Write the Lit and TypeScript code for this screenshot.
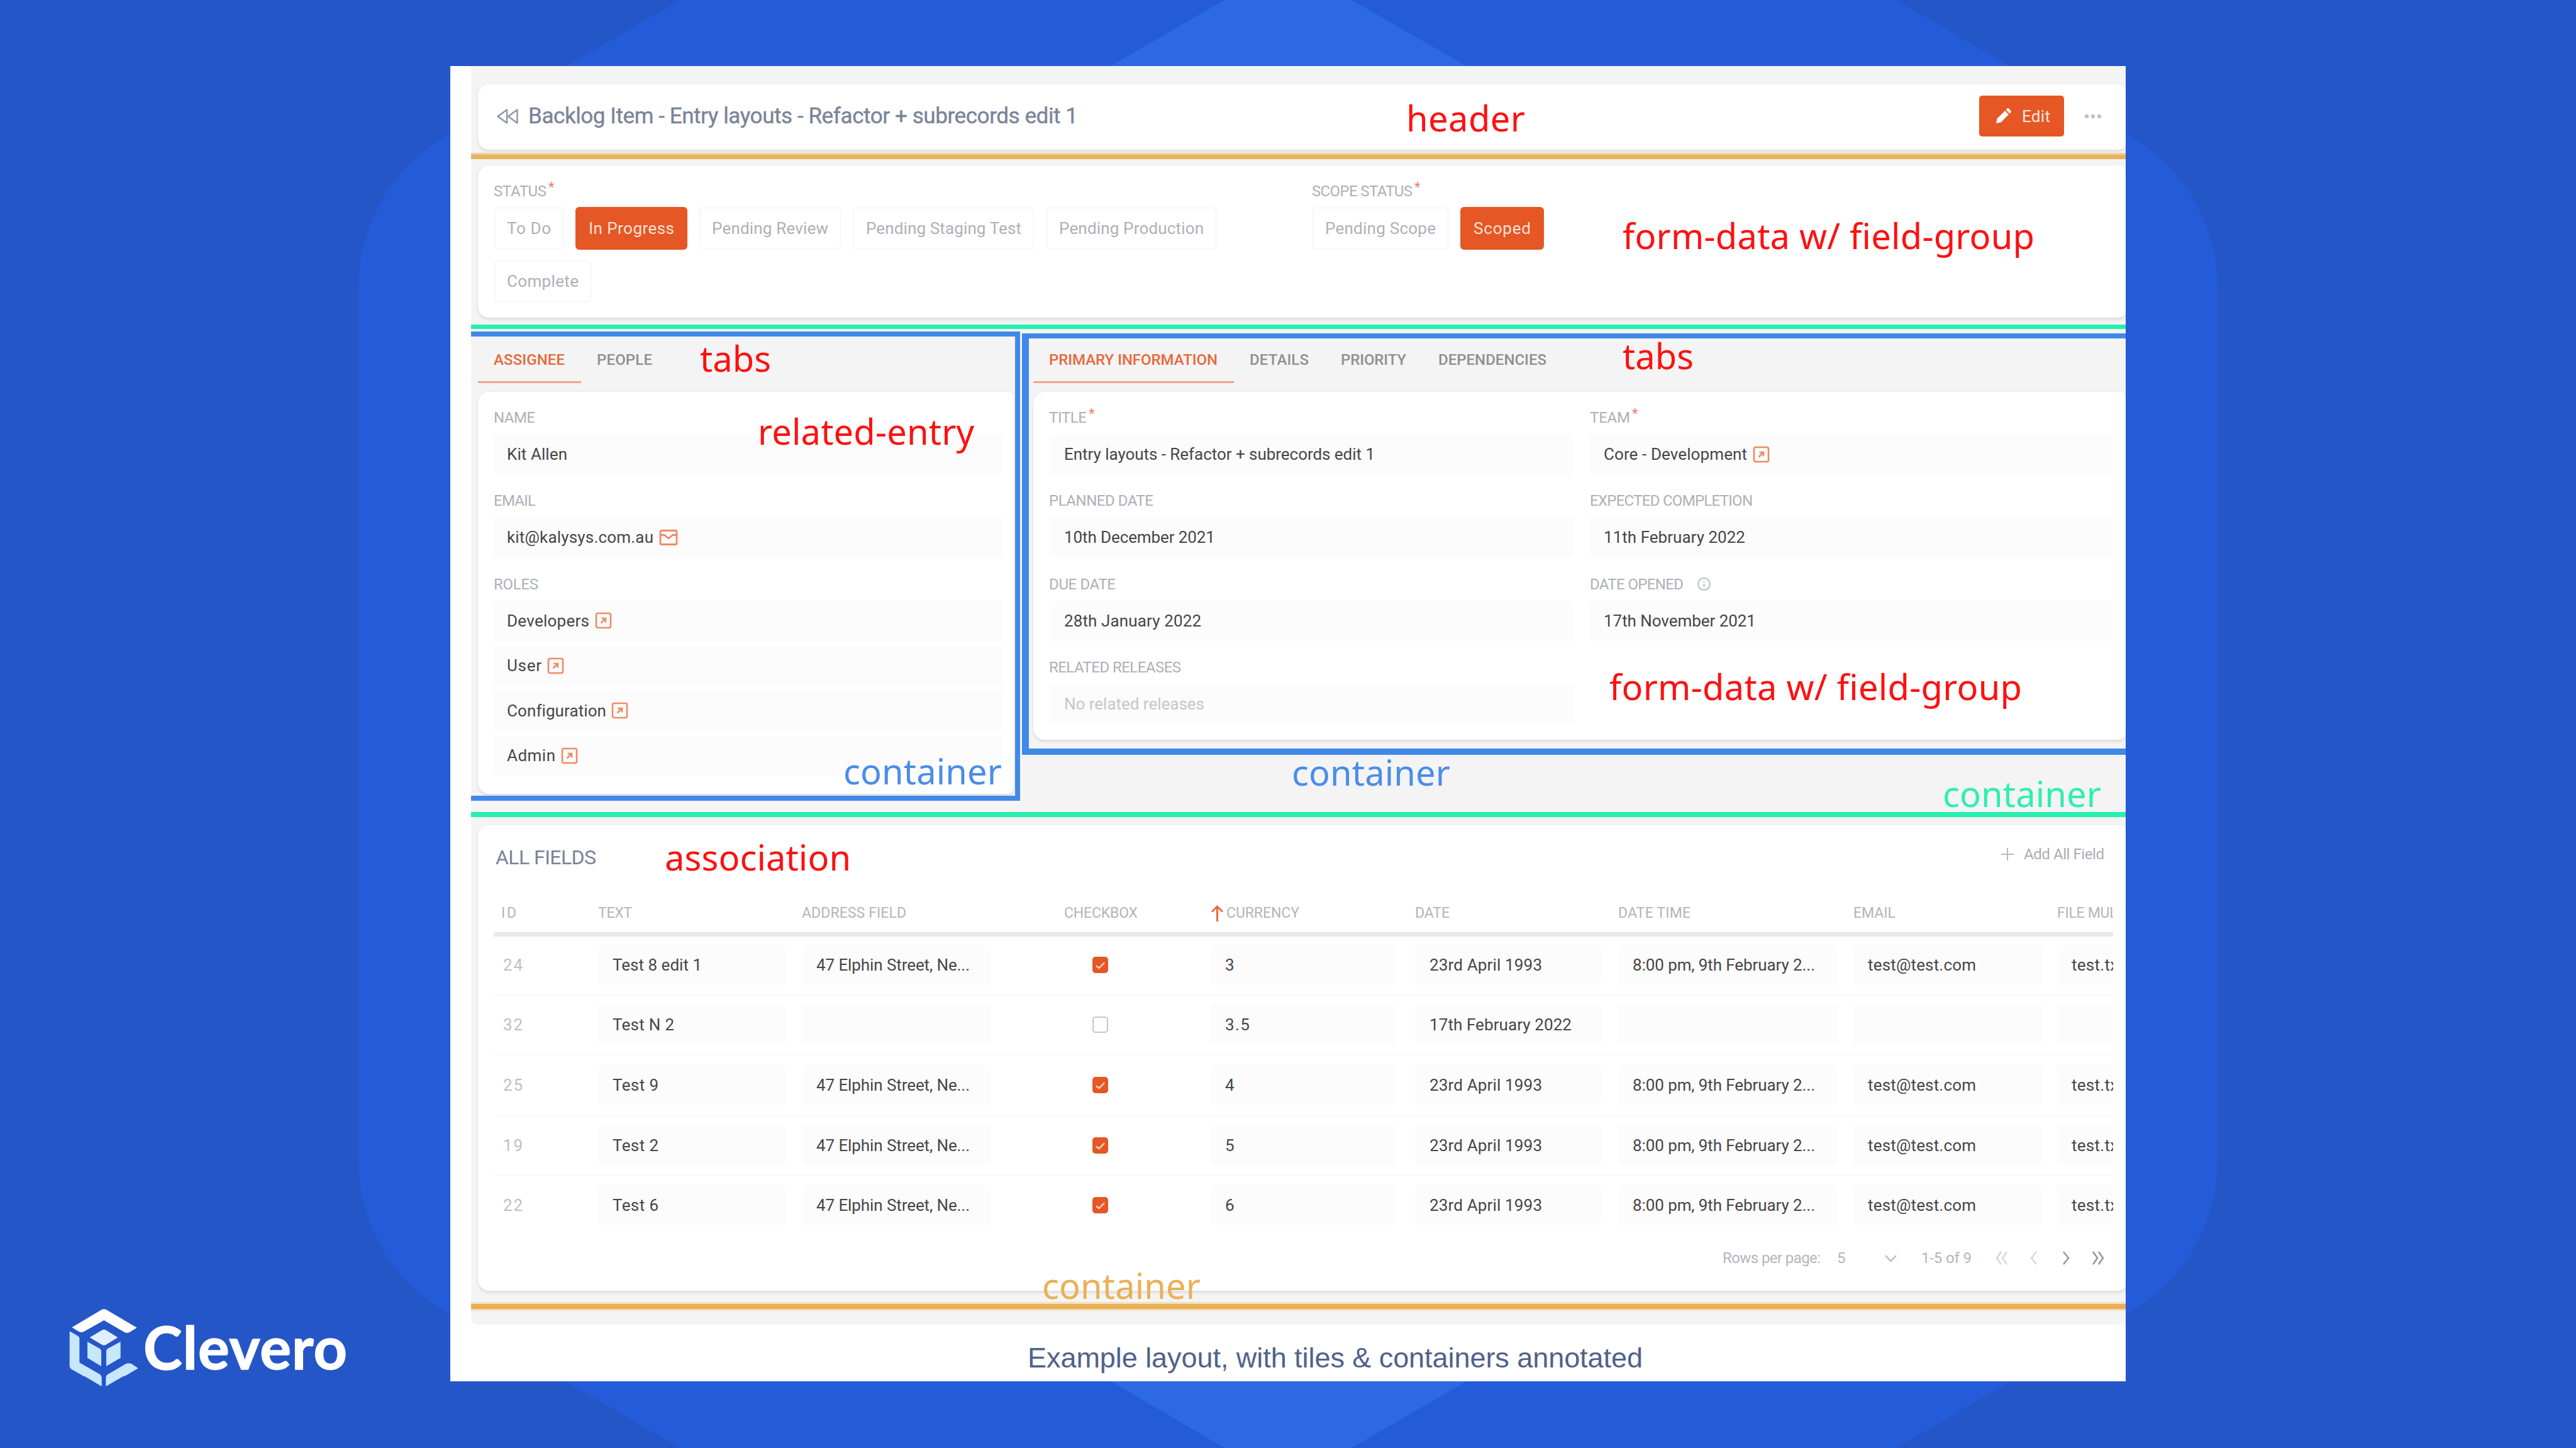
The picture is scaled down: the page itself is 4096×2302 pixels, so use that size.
import { LitElement, html, css, svg, nothing } from "lit";
import { customElement, property } from "lit/decorators.js";
import { styleMap } from "lit/directives/style-map.js";

/** A single line of text tracked so that it spans a given width. */
@customElement("fit-text")
class FitText extends LitElement {
  @property() text = "";
  @property({ type: Number }) span = 0;

  static styles = css`
    :host { display: inline-block; white-space: pre; flex: none; }
  `;

  render() {
    return html`<span>${this.text}</span>`;
  }

  updated() {
    const el = this.renderRoot.querySelector("span") as HTMLElement;
    el.style.letterSpacing = "0";
    const target = this.span + 3;
    const natural = el.getBoundingClientRect().width;
    this.style.width = `${target}px`;
    el.style.letterSpacing = `${(target - natural) / Math.max(1, this.text.length - 1)}px`;
  }
}

const t = (text: string, span: number) => html`<fit-text .text=${text} .span=${span}></fit-text>`;

const linkIcon = html`<svg class="ico" width="27" height="27" viewBox="0 0 27 27" fill="none" stroke="#f08a64" stroke-width="2.6">
  <rect x="2" y="2" width="23" height="23" rx="2.5"></rect>
  <path d="M9.5 17.5 L16.5 10.5 M10.5 10 H17 V16.5"></path></svg>`;
const mailIcon = html`<svg class="ico" width="30" height="27" viewBox="0 0 30 27" fill="none" stroke="#f08a64" stroke-width="2.8">
  <rect x="2" y="2.5" width="26" height="22" rx="2"></rect>
  <path d="M3 9.5 H8.5 L15 15 L21.5 9.5 H27"></path></svg>`;
const infoIcon = html`<svg class="info" width="23" height="23" viewBox="0 0 23 23" fill="none" stroke="#b9bcc3" stroke-width="2">
  <circle cx="11.5" cy="11.5" r="9.5"></circle><path d="M11.5 10.5 V16 M11.5 6.5 V8.5"></path></svg>`;

interface Field {
  label: string; lw: number; star?: boolean; info?: boolean;
  values: { text: string; w: number; icon?: "link" | "mail"; muted?: boolean }[];
}

const assignee: Field[] = [
  { label: "NAME", lw: 63, values: [{ text: "Kit Allen", w: 93 }] },
  { label: "EMAIL", lw: 64, values: [{ text: "kit@kalysys.com.au", w: 230, icon: "mail" }] },
  { label: "ROLES", lw: 68, values: [
    { text: "Developers", w: 128, icon: "link" },
    { text: "User", w: 52, icon: "link" },
    { text: "Configuration", w: 154, icon: "link" },
    { text: "Admin", w: 74, icon: "link" },
  ] },
];

const primary: Field[] = [
  { label: "TITLE", lw: 57, star: true, values: [{ text: "Entry layouts - Refactor + subrecords edit 1", w: 491 }] },
  { label: "TEAM", lw: 61, star: true, values: [{ text: "Core - Development", w: 225, icon: "link" }] },
  { label: "PLANNED DATE", lw: 163, values: [{ text: "10th December 2021", w: 237 }] },
  { label: "EXPECTED COMPLETION", lw: 256, values: [{ text: "11th February 2022", w: 222 }] },
  { label: "DUE DATE", lw: 103, values: [{ text: "28th January 2022", w: 215 }] },
  { label: "DATE OPENED", lw: 146, info: true, values: [{ text: "17th November 2021", w: 239 }] },
  { label: "RELATED RELEASES", lw: 207, values: [{ text: "No related releases", w: 220, muted: true }] },
];

const columns = [
  { label: "ID", lw: 21, box: 0 },
  { label: "TEXT", lw: 51, box: 298 },
  { label: "ADDRESS FIELD", lw: 163, box: 300 },
  { label: "CHECKBOX", lw: 114, box: 0 },
  { label: "CURRENCY", lw: 113, box: 295 },
  { label: "DATE", lw: 52, box: 296 },
  { label: "DATE TIME", lw: 112, box: 349 },
  { label: "EMAIL", lw: 64, box: 300 },
  { label: "FILE MULTI", lw: 109, box: 300 },
];

type Cell = [string, number] | boolean | null;
const addr: Cell = ["47 Elphin Street, Ne...", 241];
const april: Cell = ["23rd April 1993", 176];
const dt: Cell = ["8:00 pm, 9th February 2...", 287];
const mail: Cell = ["test@test.com", 169];
const file: Cell = ["test.txt", 80];
const rows: Cell[][] = [
  [["24", 28], ["Test 8 edit 1", 139], addr, true, ["3", 13], april, dt, mail, file],
  [["32", 28], ["Test N 2", 95], null, false, ["3.5", 36], ["17th February 2022", 223], null, null, null],
  [["25", 28], ["Test 9", 70], addr, true, ["4", 13], april, dt, mail, file],
  [["19", 28], ["Test 2", 70], addr, true, ["5", 13], april, dt, mail, file],
  [["22", 28], ["Test 6", 70], addr, true, ["6", 13], april, dt, mail, file],
];

/** Overlay captions: text, left, baseline, width, colour class. */
const notes: [string, number, number, number, string][] = [
  ["header", 2238, 209, 186, "red"],
  ["form-data w/ field-group", 2582, 396, 652, "red"],
  ["tabs", 1115, 591, 110, "red"],
  ["related-entry", 1207, 707, 341, "red"],
  ["container", 1343, 1247, 249, "blue"],
  ["tabs", 2582, 587, 110, "red"],
  ["container", 2056, 1249, 249, "blue"],
  ["form-data w/ field-group", 2561, 1113, 653, "red"],
  ["container", 3091, 1283, 249, "green"],
  ["association", 1059, 1384, 293, "red"],
  ["container", 1659, 2065, 249, "amber"],
];

@customElement("app-root")
class AppRoot extends LitElement {
  static styles = css`
    :host { display: block; width: 4096px; height: 2302px; overflow: hidden; }
    * { box-sizing: border-box; }
    .stage { position: relative; width: 4096px; height: 2302px; background: #2456c8; padding: 105px 0 0 716px;
      font-family: Roboto, "Liberation Sans", sans-serif; font-size: 26px; overflow: hidden; }
    .bg { position: absolute; inset: 0; }
    svg { display: block; flex: none; }
    .frame { position: relative; width: 2664px; height: 2091px; background: #fff; padding-left: 33px; overflow: hidden; }
    .shot { position: relative; width: 2631px; height: 2001px; background: #f4f4f4; padding: 29px 0 0 11px;
      border-bottom-left-radius: 8px; }
    .card { background: #fff; border-radius: 18px 10px 10px 18px;
      box-shadow: 0 4px 4px rgba(0,0,0,.07), 0 0 5px rgba(0,0,0,.05); }

    .head { height: 104px; display: flex; align-items: center; padding: 0 39px 3px 29px; }
    .title { font-size: 35px; color: #7a8498; margin-left: 15px; flex: 1; -webkit-text-stroke: .4px #7a8498; }
    .edit { width: 135px; height: 65px; background: #e55724; border-radius: 5px; color: #fde9e1; display: flex;
      align-items: center; padding-left: 25px; gap: 16px; }
    .dots { margin-left: 33px; display: flex; gap: 4px; }
    .dots i { width: 6px; height: 6px; border-radius: 2px; background: #bfc1c7; }

    .status { height: 242px; margin-top: 25px; display: grid; grid-template-columns: 1301px 1fr; padding: 26px 0 0 25px; }
    .label { display: flex; height: 30px; line-height: 30px; font-size: 24px; color: #adb0b7; align-items: center; }
    .star { color: #f27e74; font-size: 22px; line-height: 18px; height: 30px; margin-left: 3px; }
    .info { margin-left: 21px; }
    .pills { display: flex; flex-wrap: wrap; row-gap: 16px; column-gap: 18.5px; margin-top: 10px; width: 1200px; }
    .pill { height: 68px; border: 3px solid #f9f9f9; border-radius: 6px; color: #aeb0b7; display: flex; align-items: center;
      padding: 0 17.5px 1px 18px; }
    .pill.on { background: #e55724; border-color: #e55724; color: #fbe3da; }

    .split { display: flex; gap: 31px; margin-top: 33px; align-items: flex-start; }
    .left { width: 852px; }
    .right { flex: 1; }
    .tabs { height: 85px; display: flex; font-size: 24px; font-weight: 500; color: #8f8f8f; }
    .tab { height: 71px; line-height: 68px; padding: 0 26px 0 25px; border-bottom: 3px solid transparent; }
    .tab.on { color: #e8683a; border-bottom-color: #f2a488; }
    .left .card { height: 639px; padding: 26px 18px 0 25px; }
    .right .card { height: 553px; padding: 26px 20px 0 25px; display: grid; grid-template-columns: 834px 830px; column-gap: 26px;
      align-content: start; row-gap: 27.4px; }
    .left .field { margin-bottom: 27.4px; }
    .value { height: 64px; background: #fcfcfc; border-radius: 5px; margin-top: 11px; padding-left: 21px; display: flex;
      align-items: center; color: #464646; font-size: 26px; }
    .value + .value { margin-top: 7.5px; }
    .right .value { padding-left: 24px; }
    .right .field:nth-child(even) .value { padding-left: 22px; }
    .value.muted { color: #c3c6cf; }
    .ico { margin-left: 9px; }

    .table { height: 740px; margin-top: 50px; padding: 0 20px 0 25px; }
    .thead { height: 102px; display: flex; align-items: center; font-size: 32px; color: #7a8398; padding: 0 14px 0 3px; }
    .add { margin-left: auto; display: flex; align-items: center; gap: 16px; font-size: 24px; color: #aaadb5; padding-bottom: 10px; }
    .grid { overflow: hidden; }
    .row { display: grid; grid-template-columns: 166px 324px 417px 233px 325px 323px 374px 324px 300px; align-items: center; }
    .labels { height: 75px; border-bottom: 7px solid #e9e9e9; padding-top: 7px; font-size: 23px; color: #b2b5bb; margin-bottom: -2px; }
    .labels .id { padding-left: 12px; }
    .sort { display: flex; align-items: center; gap: 4px; }
    .body { height: 95.6px; border-bottom: 2px solid #f9f9f9; color: #464646; }
    .body:last-child { border-bottom-color: transparent; }
    .cell { height: 64px; background: #fcfcfc; border-radius: 5px; padding-left: 23px; display: flex; align-items: center; overflow: hidden; }
    .num { padding-left: 15px; color: #bdbfc5; }
    .check { margin-left: 45px; width: 25px; height: 26px; border-radius: 5px; border: 2.5px solid #c4c6cc; }
    .check.on { background: #e55724; border: 0; }
    .pager { height: 70px; display: flex; align-items: center; font-size: 24px; color: #b4b6bd; padding-left: 1954px; }
    .g1 { margin-left: 26px; } .g2 { margin-left: 60px; } .g3 { margin-left: 39px; }

    .caption { position: relative; margin: 28px 0 0 885px; height: 50px; color: #50628a;
      font: 45px/50px "Liberation Sans", Arial, sans-serif; }

    .line { position: absolute; left: 749px; width: 2631px; }
    .l1 { top: 243px; height: 10px; background: #ebb35b; border-top: 3px solid #ecd0a3; }
    .l2 { top: 516px; height: 7px; background: #27efb0; }
    .l3 { top: 1291px; height: 7.5px; background: #27efb0; }
    .l4 { top: 2070px; height: 14px; background: #eaaf51; border: solid #efdfc5; border-width: 3px 0; }
    .boxa { position: absolute; left: 749px; top: 527px; width: 873px; height: 746px; border: 8px solid #4189e8; border-left: 0; }
    .boxb { position: absolute; left: 1625px; top: 530px; width: 1755px; height: 670px; border: solid #4189e8; border-width: 8px 0 10px 11px; }
    .note { position: absolute; font: 56px/80px "Noto Sans", "Open Sans", sans-serif; height: 80px; margin: -62px 0 0 -2px; }
    .red { color: #ff1010; } .blue { color: #4a8cea; } .green { color: #2eeeb0; } .amber { color: #eab055; }

    .logo { position: absolute; left: 80px; top: 2050px; width: 500px; height: 180px; }
    .brand { position: absolute; left: 148px; top: 35px; color: #fff; font: 700 93px/112px Lato, sans-serif;
      -webkit-text-stroke: 1.5px #fff; }
  `;

  private field(f: Field) {
    return html`<div class="field">
      <div class="label">${t(f.label, f.lw)}${f.star ? html`<span class="star">*</span>` : nothing}${f.info ? infoIcon : nothing}</div>
      ${f.values.map((v) => html`<div class="value ${v.muted ? "muted" : ""}">${t(v.text, v.w)}${
        v.icon === "link" ? linkIcon : v.icon === "mail" ? mailIcon : nothing}</div>`)}
    </div>`;
  }

  private pill(text: string, w: number, on = false) {
    return html`<div class="pill ${on ? "on" : ""}">${t(text, w)}</div>`;
  }

  private tab(text: string, w: number, on = false) {
    return html`<div class="tab ${on ? "on" : ""}">${t(text, w)}</div>`;
  }

  private cell(c: Cell, i: number) {
    if (i === 0) return html`<div class="num">${t((c as [string, number])[0], 28)}</div>`;
    if (i === 3) {
      return html`<div class="check ${c ? "on" : ""}">${c ? html`<svg width="25" height="26" viewBox="0 0 25 26" fill="none"
        stroke="#fbd9cc" stroke-width="2.4"><path d="M6 14.5 L10.5 18 L19 9.5"></path></svg>` : nothing}</div>`;
    }
    return html`<div class="cell" style=${styleMap({ width: `${columns[i].box}px` })}>${
      Array.isArray(c) ? t(c[0], c[1]) : nothing}</div>`;
  }

  private chev(d: string, w: number, gap: number, color: string) {
    return html`<svg style=${styleMap({ marginLeft: `${gap}px` })} width=${w} height="26" viewBox="0 0 ${w} 26" fill="none"
      stroke=${color} stroke-width="2.4">${svg`<path d=${d}></path>`}</svg>`;
  }

  render() {
    return html`<div class="stage">
      <svg class="bg" width="4096" height="2302" viewBox="0 0 4096 2302">
        <path fill="#245bd8" d="M1081 0 L722 208 Q569 296 569 470 V1832 Q569 2006 722 2094 L1081 2302 H3015 L3374 2094 Q3527 2006 3527 1832 V470 Q3527 296 3374 208 L3015 0 Z"></path>
        <path fill="#2c69e2" d="M1947 0 L1766 105 V2196 L1947 2302 H2149 L2332 2196 V105 L2149 0 Z"></path>
      </svg>

      <div class="frame">
        <div class="shot">
          <div class="card head">
            <svg width="36" height="28" viewBox="0 0 36 28" fill="none" stroke="#8d96a8" stroke-width="2.4" stroke-linejoin="round">
              <path d="M17 3.5 V24.5 L2.5 14 Z M33.5 3.5 V24.5 L19 14 Z"></path></svg>
            <div class="title">${t("Backlog Item - Entry layouts - Refactor + subrecords edit 1", 871)}</div>
            <div class="edit">
              <svg width="27" height="27" viewBox="0 0 27 27" fill="#fff">
                <path d="M2 25 L3.5 17.5 L16 5 L22 11 L9.5 23.5 Z M17.5 3.5 L19.5 1.5 Q21 .5 22.5 2 L25 4.5 Q26.500 6 25.500 7.500 L23.500 9.500 Z"></path></svg>
              ${t("Edit", 42)}
            </div>
            <div class="dots"><i></i><i></i><i></i></div>
          </div>

          <div class="card status">
            <div>
              <div class="label">${t("STATUS", 81)}<span class="star">*</span></div>
              <div class="pills">
                ${this.pill("To Do", 67)}${this.pill("In Progress", 133, true)}${this.pill("Pending Review", 182)}
                ${this.pill("Pending Staging Test", 244)}${this.pill("Pending Production", 227)}${this.pill("Complete", 111)}
              </div>
            </div>
            <div>
              <div class="label">${t("SCOPE STATUS", 157)}<span class="star">*</span></div>
              <div class="pills">${this.pill("Pending Scope", 173)}${this.pill("Scoped", 88, true)}</div>
            </div>
          </div>

          <div class="split">
            <div class="left">
              <div class="tabs">${this.tab("ASSIGNEE", 110, true)}${this.tab("PEOPLE", 85)}</div>
              <div class="card">${assignee.map((f) => this.field(f))}</div>
            </div>
            <div class="right">
              <div class="tabs">${this.tab("PRIMARY INFORMATION", 265, true)}${this.tab("DETAILS", 91)}${this.tab("PRIORITY", 101)}${this.tab("DEPENDENCIES", 169)}</div>
              <div class="card">${primary.map((f) => this.field(f))}</div>
            </div>
          </div>

          <div class="card table">
            <div class="thead">${t("ALL FIELDS", 157)}
              <div class="add"><svg width="20" height="20" viewBox="0 0 20 20" stroke="#b7bac0" stroke-width="2"><path d="M10 0 V20 M0 10 H20"></path></svg>${t("Add All Field", 125)}</div>
            </div>
            <div class="grid">
              <div class="row labels">
                ${columns.map((c, i) => html`<div class=${i === 0 ? "id" : i === 4 ? "sort" : ""}>${i === 4
                  ? html`<svg width="21" height="28" viewBox="0 0 21 28" fill="none" stroke="#ea6a3c" stroke-width="3"><path d="M10.500 27 V3 M2 11.500 L10.500 3 L19 11.500"></path></svg>` : nothing}${t(c.label, c.lw)}</div>`)}
              </div>
              ${rows.map((r) => html`<div class="row body">${r.map((c, i) => this.cell(c, i))}</div>`)}
            </div>
            <div class="pager">
              ${t("Rows per page:", 153)}<span class="g1">${t("5", 13)}</span>
              ${this.chev("M1 9 L9.500 18 L18 9", 19, 60, "#b9bbc1")}
              <span class="g3">${t("1-5 of 9", 77)}</span>
              ${this.chev("M9 3 L2 13 L9 23 M18 3 L11 13 L18 23", 19, 38, "#d5d6da")}
              ${this.chev("M11 3 L3 13 L11 23", 13, 35, "#d5d6da")}
              ${this.chev("M2 3 L10 13 L2 23", 13, 39, "#8f929a")}
              ${this.chev("M2 3 L9 13 L2 23 M11 3 L18 13 L11 23", 21, 34, "#8f929a")}
            </div>
          </div>
        </div>
        <div class="caption">${t("Example layout, with tiles & containers annotated", 975)}</div>
      </div>

      <div class="line l1"></div><div class="line l2"></div><div class="line l3"></div><div class="line l4"></div>
      <div class="boxa"></div><div class="boxb"></div>
      ${notes.map(([text, x, y, w, c]) => html`<div class="note ${c}" style=${styleMap({ left: `${x}px`, top: `${y}px` })}>${t(text, w)}</div>`)}

      <div class="logo">
        <svg width="500" height="180" viewBox="0 0 1500 540">
          <path fill="#fff" d="M103 181 L244 97 Q256 91 268 97 L413 182 L378 204 Q366 210 354 204 L256 147 L160 201 Q149 207 138 202 Z"></path>
          <path fill="#e1eeff" d="M188 229 L246 194 Q256 189 266 194 L322 229 L266 263 Q256 269 246 263 Z"></path>
          <path fill="#c7e7ff" d="M177 249 L236 282 Q243 286 243 294 V366 L177 326 Z M335 249 V326 L267 366 V294 Q267 286 274 282 Z"></path>
          <path fill="#c7e7ff" d="M92 199 L132 222 Q139 226 139 235 V349 L236 404 Q245 410 245 420 V462 L165 415 Q155 414 150 408 L102 381 Q92 374 92 363 Z"></path>
          <path fill="#c7e7ff" d="M265 462 V422 Q265 410 275 404 L360 355 Q374 348 388 355 L419 376 L363 409 Q357 414 348 414 Z"></path>
        </svg>
        <div class="brand">${t("Clevero", 321)}</div>
      </div>
    </div>`;
  }
}
